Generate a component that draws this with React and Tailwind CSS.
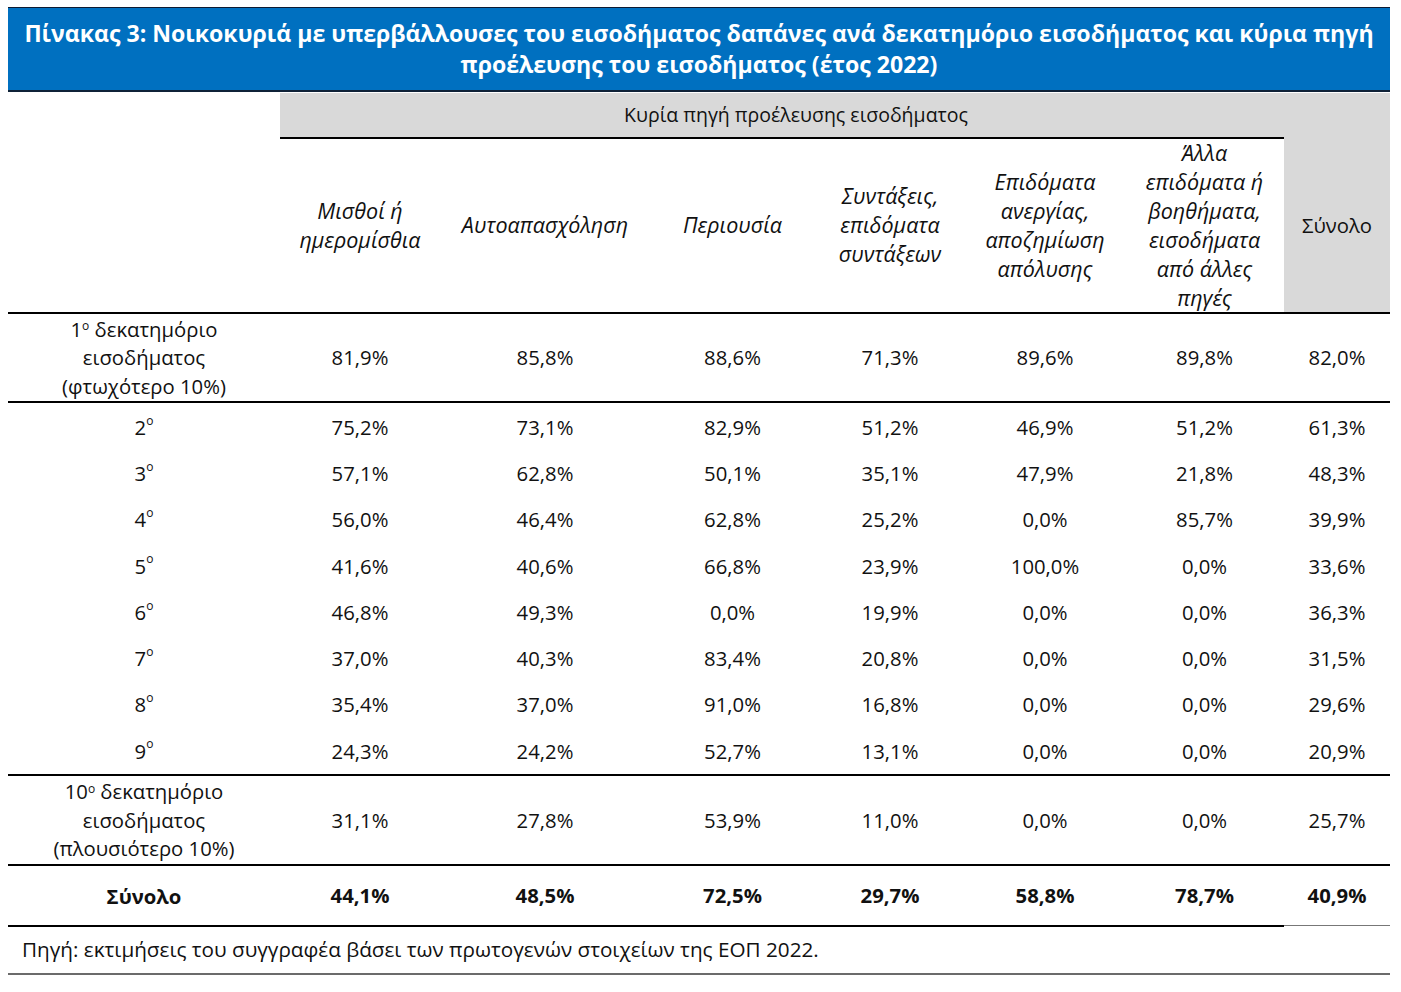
import React from "react";

const cols = "grid grid-cols-[272px_160px_210px_165px_150px_160px_159px_106px]";

const rows = [
  ["2", ["75,2%", "73,1%", "82,9%", "51,2%", "46,9%", "51,2%", "61,3%"]],
  ["3", ["57,1%", "62,8%", "50,1%", "35,1%", "47,9%", "21,8%", "48,3%"]],
  ["4", ["56,0%", "46,4%", "62,8%", "25,2%", "0,0%", "85,7%", "39,9%"]],
  ["5", ["41,6%", "40,6%", "66,8%", "23,9%", "100,0%", "0,0%", "33,6%"]],
  ["6", ["46,8%", "49,3%", "0,0%", "19,9%", "0,0%", "0,0%", "36,3%"]],
  ["7", ["37,0%", "40,3%", "83,4%", "20,8%", "0,0%", "0,0%", "31,5%"]],
  ["8", ["35,4%", "37,0%", "91,0%", "16,8%", "0,0%", "0,0%", "29,6%"]],
  ["9", ["24,3%", "24,2%", "52,7%", "13,1%", "0,0%", "0,0%", "20,9%"]],
];

const first = ["81,9%", "85,8%", "88,6%", "71,3%", "89,6%", "89,8%", "82,0%"];
const tenth = ["31,1%", "27,8%", "53,9%", "11,0%", "0,0%", "0,0%", "25,7%"];
const total = ["44,1%", "48,5%", "72,5%", "29,7%", "58,8%", "78,7%", "40,9%"];

function Sup({ children }) {
  return <sup className="text-[12px] top-[-0.55em]">{children}</sup>;
}

function Cells({ vals, bold }) {
  return vals.map((v, i) => (
    <div
      key={i}
      className={`flex items-center justify-center ${bold ? "font-bold" : ""}`}
    >
      {v}
    </div>
  ));
}

export default function App() {
  return (
    <div
      className="w-[1401px] h-[992px] bg-white text-[#111] text-[20.3px]"
      style={{ fontFamily: '"Open Sans", "Noto Sans", sans-serif' }}
    >
      <div className="pt-[7px] pl-[8px] w-[1390px]">
        {/* Title */}
        <div className="border-t border-[#0d1b33] bg-[#0070c0] h-[85px] border-b-2 border-b-[#0f2238] flex flex-col items-center justify-center text-white font-bold text-[23.1px] leading-[31px] text-center whitespace-nowrap">
          <div>
            Πίνακας 3: Νοικοκυριά με υπερβάλλουσες του εισοδήματος δαπάνες ανά δεκατημόριο εισοδήματος και κύρια πηγή
          </div>
          <div>προέλευσης του εισοδήματος (έτος 2022)</div>
        </div>

        {/* Header block */}
        <div className={`${cols} mt-[1px]`}>
          <div className="col-start-1 row-start-1 row-span-2 border-b-2 border-black" />
          <div className="col-start-2 col-span-6 row-start-1 bg-[#d9d9d9] h-[46px] flex items-center justify-center border-b-2 border-black pl-[28px] text-[19.5px]">
            Κυρία πηγή προέλευσης εισοδήματος
          </div>
          <div className="col-start-8 row-start-1 row-span-2 bg-[#d9d9d9] border-b-2 border-black flex items-center justify-center pt-[46px]">
            Σύνολο
          </div>
          {[
            ["Μισθοί ή", "ημερομίσθια"],
            ["Αυτοαπασχόληση"],
            ["Περιουσία"],
            ["Συντάξεις,", "επιδόματα", "συντάξεων"],
            ["Επιδόματα", "ανεργίας,", "αποζημίωση", "απόλυσης"],
            ["Άλλα", "επιδόματα ή", "βοηθήματα,", "εισοδήματα", "από άλλες", "πηγές"],
          ].map((lines, i) => (
            <div
              key={i}
              className="row-start-2 h-[175px] border-b-2 border-black flex flex-col items-center justify-center italic text-[21.5px] leading-[29px] text-center pb-[2px] whitespace-nowrap"
              style={{ gridColumnStart: i + 2 }}
            >
              {lines.map((l, j) => (
                <div key={j}>{l}</div>
              ))}
            </div>
          ))}
        </div>

        {/* Row 1 */}
        <div className={`${cols} h-[89px] border-b-2 border-black`}>
          <div className="flex flex-col items-center justify-center leading-[28.5px] text-center">
            <div>
              1<Sup>ο</Sup> δεκατημόριο
            </div>
            <div>εισοδήματος</div>
            <div>(φτωχότερο 10%)</div>
          </div>
          <Cells vals={first} />
        </div>

        {/* Rows 2-9 */}
        <div className="border-b-2 border-black pt-[1px]">
          {rows.map(([n, vals]) => (
            <div key={n} className={`${cols} h-[46.25px]`}>
              <div className="flex items-center justify-center">
                {n}
                <Sup>ο</Sup>
              </div>
              <Cells vals={vals} />
            </div>
          ))}
        </div>

        {/* Row 10 */}
        <div className={`${cols} h-[90px] border-b-2 border-black`}>
          <div className="flex flex-col items-center justify-center leading-[28.5px] text-center">
            <div>
              10<Sup>ο</Sup> δεκατημόριο
            </div>
            <div>εισοδήματος</div>
            <div>(πλουσιότερο 10%)</div>
          </div>
          <Cells vals={tenth} />
        </div>

        {/* Total row */}
        <div className={`${cols} h-[61px]`}>
          <div className="col-span-7 row-start-1 col-start-1 border-b-2 border-black" />
          <div className="col-start-8 row-start-1 border-b border-[#777] h-[60px]" />
          <div className="row-start-1 col-start-1 flex items-center justify-center font-bold">
            Σύνολο
          </div>
          {total.map((v, i) => (
            <div
              key={i}
              className="row-start-1 flex items-center justify-center font-bold pb-[2px]"
              style={{ gridColumnStart: i + 2 }}
            >
              {v}
            </div>
          ))}
        </div>

        {/* Footnote */}
        <div className="h-[48px] border-b-2 border-[#6b6b6b] flex items-center pl-[14px] text-[20.7px]">
          Πηγή: εκτιμήσεις του συγγραφέα βάσει των πρωτογενών στοιχείων της ΕΟΠ 2022.
        </div>
      </div>
    </div>
  );
}
